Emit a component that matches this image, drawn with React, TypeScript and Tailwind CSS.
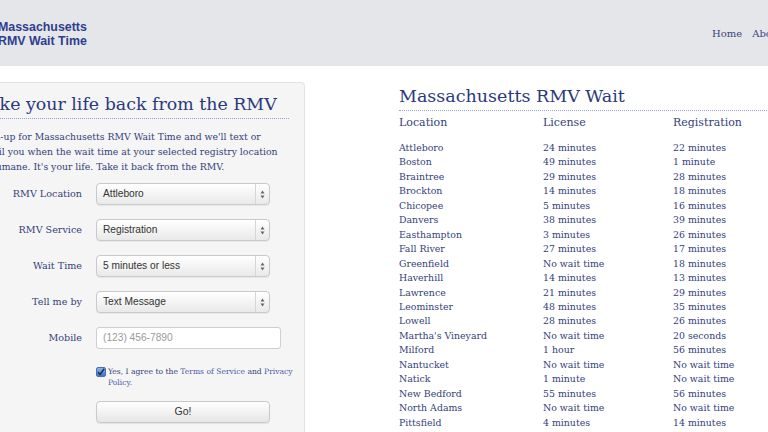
import React from 'react';

const waits: [string, string, string][] = [
  ['Attleboro', '24 minutes', '22 minutes'],
  ['Boston', '49 minutes', '1 minute'],
  ['Braintree', '29 minutes', '28 minutes'],
  ['Brockton', '14 minutes', '18 minutes'],
  ['Chicopee', '5 minutes', '16 minutes'],
  ['Danvers', '38 minutes', '39 minutes'],
  ['Easthampton', '3 minutes', '26 minutes'],
  ['Fall River', '27 minutes', '17 minutes'],
  ['Greenfield', 'No wait time', '18 minutes'],
  ['Haverhill', '14 minutes', '13 minutes'],
  ['Lawrence', '21 minutes', '29 minutes'],
  ['Leominster', '48 minutes', '35 minutes'],
  ['Lowell', '28 minutes', '26 minutes'],
  ["Martha's Vineyard", 'No wait time', '20 seconds'],
  ['Milford', '1 hour', '56 minutes'],
  ['Nantucket', 'No wait time', 'No wait time'],
  ['Natick', '1 minute', 'No wait time'],
  ['New Bedford', '55 minutes', '56 minutes'],
  ['North Adams', 'No wait time', 'No wait time'],
  ['Pittsfield', '4 minutes', '14 minutes'],
];

const slab = "font-['DejaVu_Serif',serif]";
const sans = "font-['Liberation_Sans',Arial,sans-serif]";

function FakeSelect({ value }: { value: string }) {
  return (
    <div className={`flex h-[22px] w-[174px] items-stretch rounded-[4px] border border-[#c9c9c9] bg-gradient-to-b from-white to-[#e9e9e9] shadow-[0_1px_1px_rgba(0,0,0,0.06)] ${sans}`}>
      <div className="flex flex-1 items-center pl-[6px] text-[10.2px] text-[#333]">{value}</div>
      <div className="flex w-[14px] items-center justify-center border-l border-[#d6d6d6]">
        <svg width="5" height="9" viewBox="0 0 5 9">
          <path d="M2.5 0.5 L4.5 3.5 L0.5 3.5 Z" fill="#666" />
          <path d="M2.5 8.5 L4.5 5.5 L0.5 5.5 Z" fill="#666" />
        </svg>
      </div>
    </div>
  );
}

function FormRow({ label, children }: { label: string; children: React.ReactNode }) {
  return (
    <div className="flex h-[22px] items-center">
      <div className={`w-[103px] shrink-0 text-right text-[9.6px] text-[#34407a] ${slab}`}>{label}</div>
      <div className="ml-[14px]">{children}</div>
    </div>
  );
}

export default function App() {
  return (
    <div className="h-[432px] w-[768px] overflow-hidden bg-white">
      {/* Header */}
      <div className="flex h-[66px] items-center bg-[#e5e6e9]">
        <div className={`-ml-[2px] w-[714px] shrink-0 pt-[2px] text-[12.4px] font-bold leading-[14px] text-[#2f3d8e] ${sans}`}>
          Massachusetts
          <br />
          RMV Wait Time
        </div>
        <div className={`flex shrink-0 gap-[10px] whitespace-nowrap pt-[1px] text-[10px] text-[#3a4680] ${slab}`}>
          <span>Home</span>
          <span>About</span>
          <span>Contact</span>
        </div>
      </div>

      {/* Main */}
      <div className="-ml-[37px] flex w-[900px] items-start">
        {/* Sign-up panel */}
        <div className="mt-[16px] h-[420px] w-[342px] shrink-0 rounded-[4px] border border-[#e3e3e3] bg-[#f5f5f5] px-[15px] pt-[9px]">
          <h2 className={`whitespace-nowrap border-b border-dotted border-[#9ba3c9] pb-[2px] text-[17.4px] leading-[24px] text-[#2b397d] ${slab}`}>
            Take your life back from the RMV
          </h2>
          <p className={`mt-[10px] whitespace-nowrap text-[9.3px] leading-[15px] text-[#34407a] ${slab}`}>
            Sign-up for Massachusetts RMV Wait Time and we'll text or
            <br />
            email you when the wait time at your selected registry location
            <br />
            is humane. It's your life. Take it back from the RMV.
          </p>

          <div className="mt-[9px] flex flex-col gap-[14px]">
            <FormRow label="RMV Location">
              <FakeSelect value="Attleboro" />
            </FormRow>
            <FormRow label="RMV Service">
              <FakeSelect value="Registration" />
            </FormRow>
            <FormRow label="Wait Time">
              <FakeSelect value="5 minutes or less" />
            </FormRow>
            <FormRow label="Tell me by">
              <FakeSelect value="Text Message" />
            </FormRow>
            <FormRow label="Mobile">
              <div className={`flex h-[22px] w-[185px] items-center rounded-[3px] border border-[#cfcfcf] bg-white pl-[6px] text-[10.2px] text-[#9a9a9a] ${sans}`}>
                (123) 456-7890
              </div>
            </FormRow>
          </div>

          <div className="ml-[117px] mt-[17px] flex items-start">
            <div className="mt-[1px] flex h-[10px] w-[10px] shrink-0 items-center justify-center rounded-[2px] border border-[#4a6fb0] bg-gradient-to-b from-[#8fb3e8] to-[#3d73c9]">
              <svg width="8" height="8" viewBox="0 0 8 8">
                <path d="M1 4.2 L3.1 6.4 L7.2 0.8" stroke="#1b2a55" strokeWidth="1.5" fill="none" />
              </svg>
            </div>
            <div className={`ml-[2px] whitespace-nowrap text-[7.6px] leading-[11px] text-[#34407a] ${slab}`}>
              Yes, I agree to the <span className="text-[#4a5ba8]">Terms of Service</span> and <span className="text-[#4a5ba8]">Privacy</span>
              <br />
              <span className="text-[#4a5ba8]">Policy</span>.
            </div>
          </div>

          <div className={`ml-[117px] mt-[13px] flex h-[22px] w-[174px] items-center justify-center rounded-[4px] border border-[#c9c9c9] bg-gradient-to-b from-white to-[#e6e6e6] text-[10.5px] text-[#333] shadow-[0_1px_1px_rgba(0,0,0,0.08)] ${sans}`}>
            Go!
          </div>
        </div>

        {/* Wait times */}
        <div className={`ml-[94px] mt-[18px] w-[420px] shrink-0 ${slab}`}>
          <h2 className="border-b border-dotted border-[#9ba3c9] pb-[2px] text-[17.5px] leading-[24px] text-[#2b397d]">
            Massachusetts RMV Wait
          </h2>
          <div className="mt-[4px] flex text-[11px] leading-[16px] text-[#34407a]">
            <div className="w-[144px]">Location</div>
            <div className="w-[130px]">License</div>
            <div>Registration</div>
          </div>
          <div className="mt-[10px] text-[9.4px] leading-[14.45px] text-[#34407a]">
            {waits.map(([loc, lic, reg]) => (
              <div key={loc} className="flex whitespace-nowrap">
                <div className="w-[144px]">{loc}</div>
                <div className="w-[130px]">{lic}</div>
                <div>{reg}</div>
              </div>
            ))}
          </div>
        </div>
      </div>
    </div>
  );
}
